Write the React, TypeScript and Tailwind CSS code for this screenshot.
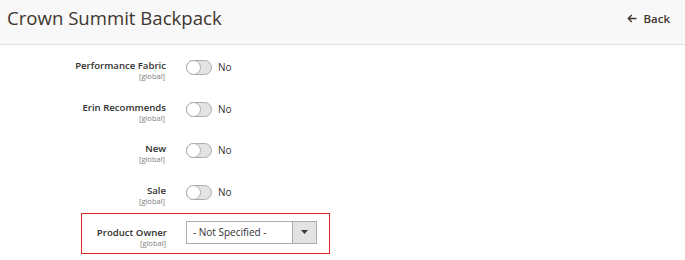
import React from "react";

function Toggle() {
  return (
    <div className="flex items-center mt-[1px]">
      <div className="relative w-[26px] h-[15px] rounded-full border border-[#adadad] bg-[#e3e3e3]">
        <div className="absolute left-[-1px] top-[-1px] w-[15px] h-[15px] rounded-full bg-white border border-[#adadad]" />
      </div>
      <span className="text-[10px] leading-[15px] text-[#303030] ml-[6px]">No</span>
    </div>
  );
}

function Label({ label }: { label: string }) {
  return (
    <div className="flex flex-col items-end">
      <span className="text-[9.6px] leading-[13px] font-semibold text-[#303030] whitespace-nowrap">{label}</span>
      <span className="text-[7.5px] leading-[9px] text-[#808080] pr-[1px]">[global]</span>
    </div>
  );
}

function Row({ label, children }: { label: string; children: React.ReactNode }) {
  return (
    <div className="flex items-start h-[24px]">
      <div className="w-[166px] flex justify-end">
        <Label label={label} />
      </div>
      <div className="ml-[20px]">{children}</div>
    </div>
  );
}

export default function App() {
  return (
    <div className="w-[685px] h-[260px] bg-white overflow-hidden" style={{ fontFamily: '"Open Sans", sans-serif' }}>
      <div className="h-[45px] bg-[#f8f8f8] border-b border-[#e3e3e3] flex items-center justify-between pl-[7px] pr-[15px]">
        <h1 className="text-[18.6px] text-[#41362f] font-normal leading-none mt-[-7px]">Crown Summit Backpack</h1>
        <div className="flex items-center gap-[6px] text-[#41362f] mt-[-7px]">
          <svg width="10" height="9" viewBox="0 0 10 9" fill="none" stroke="#41362f" strokeWidth="1.4">
            <path d="M9.5 4.5H1.5M4.8 1L1.3 4.5L4.8 8" />
          </svg>
          <span className="text-[11.5px] font-semibold">Back</span>
        </div>
      </div>
      <div className="flex flex-col gap-[17.5px] pt-[14px]">
        <Row label="Performance Fabric"><Toggle /></Row>
        <Row label="Erin Recommends"><Toggle /></Row>
        <Row label="New"><Toggle /></Row>
        <Row label="Sale"><Toggle /></Row>
      </div>
      <div className="ml-[81px] mt-[5px] w-[249px] h-[41px] bg-[#e22626] p-px">
        <div className="w-full h-full bg-white flex items-start pt-[7px]">
          <div className="w-[85px] flex justify-end pt-[5px]">
            <Label label="Product Owner" />
          </div>
          <div className="ml-[19px] w-[131px] h-[23px] border border-[#adadad] flex">
            <div className="flex-1 text-[10px] text-[#303030] pl-[6px] leading-[21px] whitespace-nowrap">- Not Specified -</div>
            <div className="w-[24px] border-l border-[#adadad] bg-[#e3e3e3] flex items-center justify-center">
              <svg width="7" height="4" viewBox="0 0 7 4"><path d="M0 0H7L3.5 4Z" fill="#41362f" /></svg>
            </div>
          </div>
        </div>
      </div>
    </div>
  );
}
